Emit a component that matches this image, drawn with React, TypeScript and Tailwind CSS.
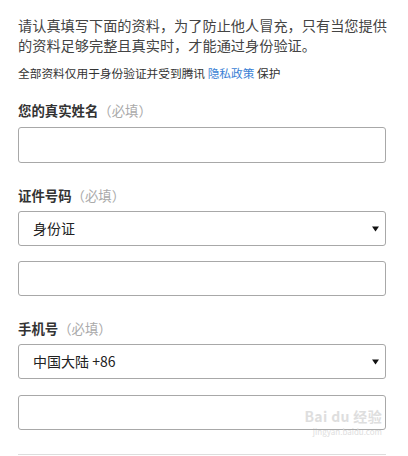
const font = '[font-family:"Microsoft_YaHei","Noto_Sans_CJK_SC",sans-serif]';

function Label({ text }: { text: string }) {
  return (
    <div className="text-[13.4px] leading-[20px] text-[#333]">
      <span className="font-bold">{text}</span>
      <span className="text-[#aaa]">（必填）</span>
    </div>
  );
}

function Input({ className = '' }: { className?: string }) {
  return <div className={`rounded-[3px] border border-[#a8a8a8] bg-white ${className}`} />;
}

function Select({ value, className = '' }: { value: string; className?: string }) {
  return (
    <div
      className={`flex h-[35px] items-center justify-between rounded-[3px] border border-[#a8a8a8] bg-white pl-[14px] pr-[6px] text-[14px] text-[#222] ${className}`}
    >
      <span>{value}</span>
      <svg width="7" height="6" viewBox="0 0 7 6" className="mt-[1px]">
        <path d="M0 0.5H7L3.5 5.5Z" fill="#111" />
      </svg>
    </div>
  );
}

export default function App() {
  return (
    <div className={`relative h-[456px] w-[408px] overflow-hidden bg-white pl-[18px] pr-[22px] pt-[15px] ${font}`}>
      <p className="whitespace-nowrap text-[14.2px] leading-[20px] text-[#444]">
        请认真填写下面的资料，为了防止他人冒充，只有当您提供
        <br />
        的资料足够完整且真实时，才能通过身份验证。
      </p>
      <p className="mt-[9px] text-[11.7px] leading-[18px] text-[#333]">
        全部资料仅用于身份验证并受到腾讯 <span className="text-[#3a7fd5]">隐私政策</span> 保护
      </p>

      <div className="mt-[18px]">
        <Label text="您的真实姓名" />
      </div>
      <Input className="mt-[7px] h-[36px]" />

      <div className="mt-[22px]">
        <Label text="证件号码" />
      </div>
      <Select value="身份证" className="mt-[6px]" />
      <Input className="mt-[15px] h-[35px]" />

      <div className="mt-[22px]">
        <Label text="手机号" />
      </div>
      <Select value="中国大陆 +86" className="mt-[6px]" />
      <Input className="mt-[16px] h-[35px]" />

      <div className="mt-[24px] border-t border-[#ddd]" />

      <div className="absolute right-[26px] top-[408px] flex flex-col items-end text-[#dedede]">
        <span className="text-[14px] font-bold leading-[16px] tracking-wide">Bai du 经验</span>
        <span className="mt-[3px] text-[8px] leading-[10px]">jingyan.baidu.com</span>
      </div>
    </div>
  );
}
